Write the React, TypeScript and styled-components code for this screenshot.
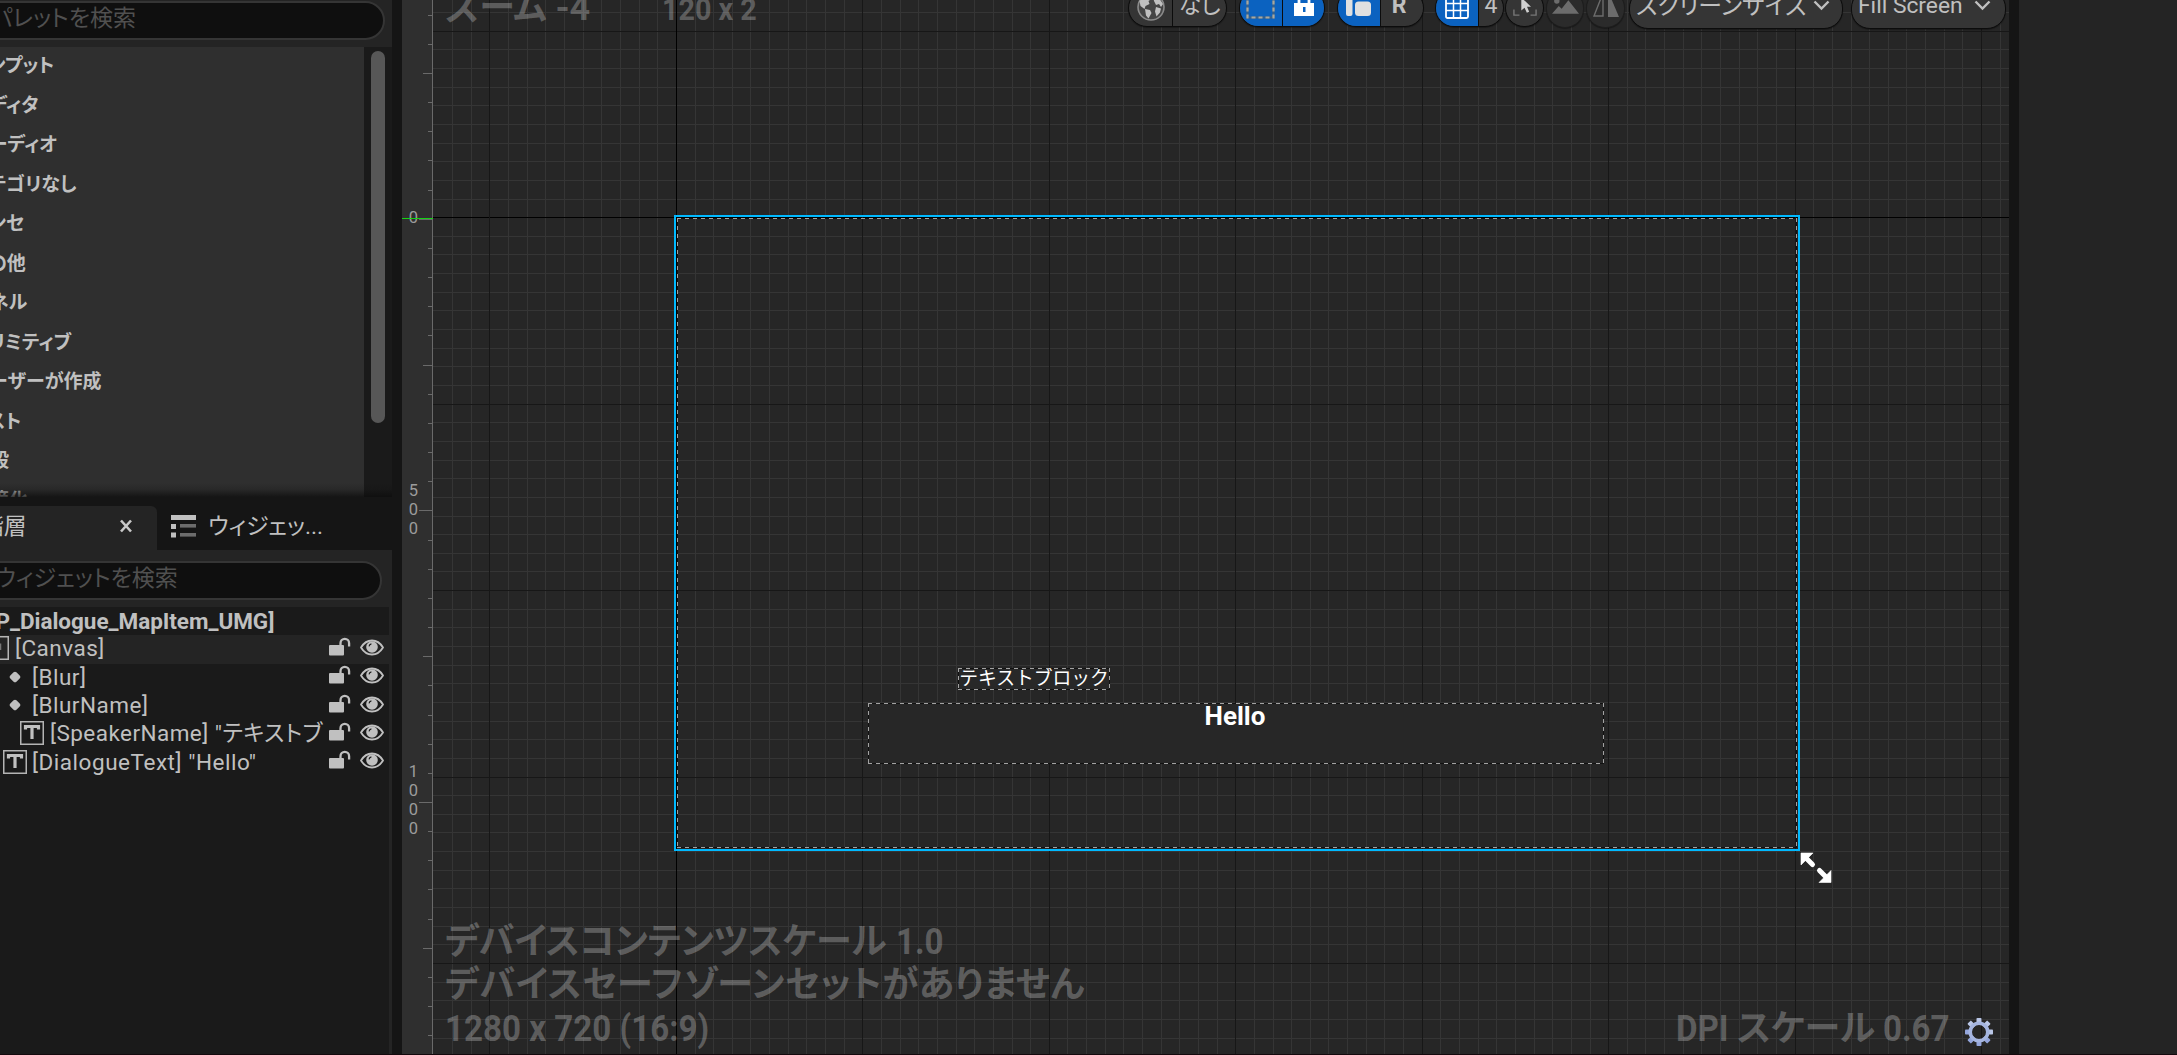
import React from "react";
import styled, { createGlobalStyle } from "styled-components";

const FONT = `Roboto, "Noto Sans CJK JP", sans-serif`;

const GlobalStyle = createGlobalStyle`
  html, body { margin: 0; padding: 0; background: #242424; overflow: hidden; }
  * { box-sizing: border-box; }
`;

const Editor = styled.div`
  display: grid;
  grid-template-columns: 392px 10px 31px 1576px 10px 1fr;
  width: 2177px;
  height: 1055px;
  overflow: hidden;
  background: #242424;
  border-bottom: 1px solid #14090d;
  color: #c0c0c0;
  font-family: ${FONT};
  font-feature-settings: "palt";
  white-space: nowrap;
`;

const Gutter = styled.div`
  background: #151515;
`;

/* ---------- left column ---------- */

const LeftColumn = styled.div`
  display: flex;
  flex-direction: column;
  min-width: 0;
  height: 1054px;
  overflow: hidden;
  background: #151515;
`;

const PaletteHeader = styled.div`
  flex: none;
  height: 47px;
  padding-top: 1px;
  background: #242424;
`;

const SearchBox = styled.div<{ $right: number; $indent: number; $lift: number }>`
  display: flex;
  align-items: center;
  height: 39px;
  margin-left: -40px;
  margin-right: ${(p) => p.$right}px;
  padding: 0 0 ${(p) => p.$lift}px ${(p) => p.$indent}px;
  border: 2px solid #353535;
  border-radius: 20px;
  background: #0f0f0f;
  color: #505050;
  font-size: 23px;
`;

const PaletteBody = styled.div`
  position: relative;
  display: flex;
  flex: none;
  height: 450px;
  overflow: hidden;
  background: #2f2f2f;

  &::after {
    content: "";
    position: absolute;
    left: 0;
    right: 0;
    bottom: 0;
    height: 14px;
    background: linear-gradient(rgba(15, 15, 15, 0), rgba(15, 15, 15, 0.2) 45%, rgba(12, 12, 12, 0.75));
  }
`;

const CategoryList = styled.div`
  flex: 1;
  min-width: 0;
  margin-left: -29px;
`;

const Category = styled.div`
  height: 39.5px;
  line-height: 38px;
  font-size: 19px;
  font-weight: 700;
`;

const ScrollTrack = styled.div`
  flex: none;
  width: 28px;
  padding: 4px 7px 0;
  background: #1a1a1a;
`;

const ScrollThumb = styled.div`
  height: 372px;
  border-radius: 7px;
  background: #575757;
`;

const TabBar = styled.div`
  display: flex;
  flex: none;
  height: 53px;
  padding-top: 9px;
`;

const Tab = styled.div<{ $active?: boolean }>`
  display: flex;
  align-items: center;
  width: ${(p) => (p.$active ? "157px" : "235px")};
  height: 44px;
  padding: ${(p) => (p.$active ? "0 24px 4px 0" : "0 0 4px 14px")};
  border-radius: 0 6px 0 0;
  background: ${(p) => (p.$active ? "#242424" : "transparent")};
  font-size: 22.8px;
`;

const TabTitle = styled.span<{ $shift?: number }>`
  margin-left: ${(p) => p.$shift ?? 0}px;
  padding-bottom: 4px;
`;

const CloseIcon = styled.svg`
  margin-left: auto;
`;

const HierarchyPanel = styled.div`
  display: flex;
  flex: 1;
  flex-direction: column;
  padding-top: 11px;
  background: #242424;
`;

const Tree = styled.div`
  flex: 1;
  margin: 7px 3px 0 0;
  background: #1a1a1a;
`;

const TreeRow = styled.div<{ $indent: number; $hover?: boolean; $root?: boolean }>`
  display: flex;
  align-items: center;
  height: 28.3px;
  padding: 0 5px ${(p) => (p.$root ? 0 : 2)}px 0;
  background: ${(p) => (p.$hover ? "#242424" : "transparent")};
  font-size: 22.5px;
  font-weight: ${(p) => (p.$root ? 700 : 400)};
  line-height: 26px;

  & > :first-child {
    margin-left: ${(p) => p.$indent}px;
  }
`;

const TreeLabel = styled.span<{ $gap?: number; $spacing?: number }>`
  flex: 1;
  min-width: 0;
  padding-left: ${(p) => p.$gap ?? 0}px;
  letter-spacing: ${(p) => p.$spacing ?? 0.5}px;
`;

const RootLabel = styled.span`
  letter-spacing: -0.04px;
`;

const RowIcons = styled.div`
  display: flex;
  flex: none;
  gap: 9px;
  padding-bottom: 4px;
`;

/* ---------- ruler ---------- */

const Ruler = styled.div`
  position: relative;
  height: 1054px;
  overflow: hidden;
  background: #2f2f2f;
`;

const RulerTicks = styled.svg`
  display: block;
`;

const RulerLabel = styled.div<{ $top: number }>`
  position: absolute;
  left: 6px;
  top: ${(p) => p.$top}px;
  width: 11px;
  color: #9c9c9c;
  font-size: 16.5px;
  line-height: 19px;
  text-align: center;
  word-break: break-all;
  white-space: normal;
`;

const RulerCursor = styled.div`
  position: absolute;
  left: 0;
  top: 218px;
  width: 31px;
  height: 1px;
  background: #14d214;
`;

/* ---------- design canvas ---------- */

const Surface = styled.div`
  position: relative;
  height: 1054px;
  overflow: hidden;
  background: #262626;
`;

const Layer = styled.svg`
  position: absolute;
  left: 0;
  top: 0;
`;

const Watermark = styled.div<{ $left: number; $top: number; $spacing?: number; $size?: number }>`
  position: absolute;
  left: ${(p) => p.$left}px;
  top: ${(p) => p.$top}px;
  display: flex;
  color: rgba(255, 255, 255, 0.26);
  font-size: ${(p) => p.$size ?? 36}px;
  font-weight: 700;
  line-height: 43px;
  letter-spacing: ${(p) => p.$spacing ?? 0}px;
`;

const Narrow = styled.span<{ $w?: number; $gap?: number }>`
  display: inline-block;
  width: ${(p) => (p.$w ? p.$w + "px" : "auto")};
  margin-left: ${(p) => p.$gap ?? 0}px;
  transform: scaleX(0.92);
  transform-origin: 0 50%;
`;

const WidgetText = styled.div<{ $x: number; $y: number; $w: number; $size: number; $bold?: boolean }>`
  position: absolute;
  left: ${(p) => p.$x}px;
  top: ${(p) => p.$y}px;
  width: ${(p) => p.$w}px;
  color: #fff;
  font-size: ${(p) => p.$size}px;
  font-weight: ${(p) => (p.$bold ? 700 : 400)};
  font-feature-settings: normal;
  line-height: 24px;
  text-align: center;
`;

const Toolbar = styled.div`
  position: absolute;
  left: 695px;
  top: -11px;
  display: flex;
  align-items: flex-start;
`;

const Pill = styled.div<{ $w: number; $gap?: number; $h?: number; $dim?: boolean }>`
  display: flex;
  flex: none;
  width: ${(p) => p.$w}px;
  height: ${(p) => p.$h ?? 38}px;
  margin-right: ${(p) => p.$gap ?? 0}px;
  border: 1px solid ${(p) => (p.$dim ? "#1d1d1d" : "#0c0c0c")};
  border-radius: 19px;
  background: ${(p) => (p.$dim ? "#2b2b2b" : "#353535")};
  box-shadow: 0 1px 1px rgba(0, 0, 0, 0.35);
  overflow: hidden;
`;

const Segment = styled.div<{ $w?: number; $on?: boolean; $div?: boolean; $size?: number; $bold?: boolean; $lift?: number }>`
  display: flex;
  flex: ${(p) => (p.$w ? "none" : 1)};
  align-items: center;
  justify-content: center;
  width: ${(p) => (p.$w ? p.$w + "px" : "auto")};
  border-right: ${(p) => (p.$div ? "1px solid #0c0c0c" : "none")};
  background: ${(p) => (p.$on ? "#0b62c0" : "transparent")};
  font-size: ${(p) => p.$size ?? 23}px;
  font-weight: ${(p) => (p.$bold ? 700 : 400)};
  padding-bottom: ${(p) => p.$lift ?? 6}px;
  line-height: 30px;
`;

const Dropdown = styled.div<{ $start: number; $end: number; $size: number }>`
  display: flex;
  flex: 1;
  align-items: center;
  justify-content: space-between;
  padding: 0 ${(p) => p.$end}px 7px ${(p) => p.$start}px;
  font-size: ${(p) => p.$size}px;
  line-height: 30px;
`;

/* ---------- icons ---------- */

const Lock = () => (
  <svg width="22" height="19" viewBox="0 0 22 19">
    <path d="M11.5 9V6.2a4.3 4.3 0 0 1 8.6 0V9.5" fill="none" stroke="#c0c0c0" strokeWidth="2.3" />
    <rect x="0" y="8" width="15" height="10.5" rx="1" fill="#c0c0c0" />
  </svg>
);

const Eye = () => (
  <svg width="24" height="19" viewBox="0 0 24 19">
    <path d="M1 10.5C4 5.500 8 3.500 12 3.500s8 2 11 7c-3 5-7 7-11 7s-8-2-11-7z" fill="none" stroke="#c0c0c0" strokeWidth="1.8" />
    <circle cx="12" cy="10" r="5.8" fill="#c0c0c0" />
    <path d="M9 9.400a3 3 0 0 1 2.400-2.500" fill="none" stroke="#1a1a1a" strokeWidth="1.100" />
  </svg>
);

const BoxIcon = styled.svg`
  flex: none;
  width: 24px;
  height: 24px;
`;

const TextIcon = () => (
  <BoxIcon viewBox="0 0 24 24">
    <rect x="0.75" y="0.75" width="22.5" height="22.5" fill="none" stroke="#b4b4b4" strokeWidth="1.500" />
    <path d="M5.500 8.500V5.500h13v3M12 5.500V18" fill="none" stroke="#c0c0c0" strokeWidth="3.200" />
  </BoxIcon>
);

const CanvasIcon = () => (
  <BoxIcon viewBox="0 0 24 24">
    <rect x="0.75" y="0.75" width="22.5" height="22.5" fill="none" stroke="#b4b4b4" strokeWidth="1.500" />
    <path d="M15.500 14V7.500" fill="none" stroke="#777" strokeWidth="1.500" />
  </BoxIcon>
);

const DiamondIcon = styled.svg`
  flex: none;
  width: 12px;
  height: 12px;
`;

const Diamond = () => (
  <DiamondIcon viewBox="0 0 12 12">
    <rect x="1.700" y="1.700" width="8.600" height="8.600" rx="2" transform="rotate(45 6 6)" fill="#c0c0c0" />
  </DiamondIcon>
);

const BindIcon = () => (
  <svg width="25" height="23" viewBox="0 0 25 23">
    <rect x="0" y="0" width="25" height="5" fill="#c0c0c0" />
    <rect x="0" y="9" width="5" height="5" fill="#c0c0c0" />
    <rect x="0" y="17.500" width="5" height="5" fill="#c0c0c0" />
    <rect x="9" y="9" width="16" height="3.600" fill="#6c6c6c" />
    <rect x="9" y="18" width="16" height="3.600" fill="#6c6c6c" />
  </svg>
);

const Chevron = () => (
  <svg width="17" height="11" viewBox="0 0 17 11">
    <path d="M1.500 1.500l7 7 7-7" fill="none" stroke="#c0c0c0" strokeWidth="2.400" />
  </svg>
);

const Globe = () => (
  <svg width="28" height="28" viewBox="0 0 28 28">
    <circle cx="14" cy="14" r="13" fill="#454545" stroke="#8a8a8a" strokeWidth="1.600" />
    <path d="M2.500 8l5-5 6 0 1 3-3 2 1 3-4 2-1 3-4-3zM8 16l5 1 1.500 3-3 5.500-2.500-3zM16 3l6 2 4 6-2 3-2-3-3 1-2-4zM19 14l5 1.500-1 4-3.500 4-1.500-5z" fill="#c0c0c0" />
  </svg>
);

const Marquee = () => (
  <svg width="30" height="30" viewBox="0 0 30 30">
    <rect x="1.500" y="1.500" width="26" height="26" fill="none" stroke="#3b6288" strokeWidth="2.200" />
    <rect x="1.500" y="1.500" width="26" height="26" fill="none" stroke="#a8a8a0" strokeWidth="2.200" strokeDasharray="4 3" />
  </svg>
);

const Padlock = () => (
  <svg width="20" height="26" viewBox="0 0 20 26">
    <path d="M5 14V7a5 5 0 0 1 10 0v7" fill="none" stroke="#fff" strokeWidth="2.800" />
    <path d="M0 12h20v13H0zM9 16v5h2.500v-5z" fill="#fff" fillRule="evenodd" />
  </svg>
);

const Align = () => (
  <svg width="26" height="26" viewBox="0 0 26 26">
    <rect x="0" y="0" width="6.500" height="25" rx="2" fill="#e0e0e0" />
    <rect x="9" y="10.500" width="16" height="14.500" rx="3.500" fill="#e0e0e0" />
  </svg>
);

const GridIcon = () => (
  <svg width="24" height="24" viewBox="0 0 24 24">
    <rect x="1" y="1" width="22" height="22" rx="1.500" fill="none" stroke="#fff" strokeWidth="1.800" />
    <path d="M8.500 1v22M15.500 1v22M1 8.500h22M1 15.500h22" stroke="#fff" strokeWidth="1.500" />
  </svg>
);

const PointerIcon = () => (
  <svg width="24" height="24" viewBox="0 0 26 26">
    <path d="M1 7V1h6M19 1h6v6M25 19v6h-6M7 25H1v-6" fill="none" stroke="#777" strokeWidth="1.500" />
    <path d="M9 6v14l3.500-3 2.500 5.500 2.500-1.200-2.300-5.300h4.300z" fill="#d0d0d0" />
  </svg>
);

const Landscape = () => (
  <svg width="27" height="20" viewBox="0 0 28 20">
    <circle cx="5" cy="7" r="2.800" fill="#6c6c6c" />
    <path d="M0 20l7-8 3 3 7-9 11 14z" fill="#6c6c6c" />
  </svg>
);

const Mirror = () => (
  <svg width="28" height="28" viewBox="0 0 28 28">
    <path d="M2 27L11 4v23z" fill="none" stroke="#6c6c6c" strokeWidth="1.400" />
    <path d="M16 2l11 26H16z" fill="#6c6c6c" />
  </svg>
);

const Gear = () => (
  <g transform="translate(1546 1032)">
    {Array.from({ length: 8 }, (_, i) => (
      <rect key={i} x="-2.500" y="-14" width="5" height="7" rx="0.800" fill={i > 2 && i < 7 ? "#93a5dc" : "#b9c6e6"} transform={`rotate(${i * 45})`} />
    ))}
    <circle r="8.800" fill="none" stroke="#a5b5e0" strokeWidth="3.600" />
  </g>
);

const ResizeCursor = () => (
  <g fill="#fff" stroke="#fff">
    <path d="M1368 853h12l-12 12zM1398 882.500h-12l12-12z" strokeWidth="0.600" />
    <path d="M1373 858l6.500 6.500M1386.500 870.500l7 7" fill="none" strokeWidth="5" strokeLinecap="round" />
  </g>
);

/* ---------- drawings ---------- */

const range = (from: number, to: number) => Array.from({ length: to - from + 1 }, (_, i) => from + i);

const CELL = 18.645;
const ORIGIN_X = 676.4 - 433;
const ORIGIN_Y = 217.7;

const lineColor = (k: number) => (k === 0 ? "#000" : k % 10 === 0 ? "#171717" : "#353535");
const byWeight = (a: number, b: number) => Number(a % 10 === 0) - Number(b % 10 === 0);

const GridDrawing = () => (
  <Layer width="1576" height="1054" shapeRendering="crispEdges">
    {range(-12, 71).filter((k) => k % 10 !== 0).map((k) => (
      <rect key={"v" + k} x={Math.floor(ORIGIN_X + k * CELL)} y="0" width="1" height="1054" fill={lineColor(k)} />
    ))}
    {range(-11, 44).sort(byWeight).map((k) => (
      <rect key={"h" + k} x="0" y={Math.floor(ORIGIN_Y + k * CELL)} width="1576" height="1" fill={lineColor(k)} />
    ))}
    {range(-1, 7).map((k) => (
      <rect key={"m" + k} x={Math.floor(ORIGIN_X + k * 10 * CELL)} y="0" width="1" height="1054" fill={lineColor(k * 10)} />
    ))}
  </Layer>
);

const DashedBox = ({ x, y, w, h, fill = "none" }: { x: number; y: number; w: number; h: number; fill?: string }) => {
  const d = `M${x} ${y + 0.5}h${w}M${x} ${y + h - 0.5}h${w}M${x + 0.5} ${y}v${h}M${x + w - 0.5} ${y}v${h}`;
  return (
    <g shapeRendering="crispEdges">
      <rect x={x} y={y} width={w} height={h} fill={fill} />
      <path d={d} stroke="#111" fill="none" />
      <path d={d} stroke="#a2a2a2" fill="none" strokeDasharray="4 4" />
    </g>
  );
};

const tickLength = (k: number) => (k % 10 === 0 ? 13 : k % 5 === 0 ? 9 : 4);

const CATEGORIES = ["インプット", "エディタ", "オーディオ", "カテゴリなし", "シンセ", "その他", "パネル", "プリミティブ", "ユーザーが作成", "リスト", "一般", "最適化"];

const Icons = () => (
  <RowIcons>
    <Lock />
    <Eye />
  </RowIcons>
);

export default function App() {
  return (
    <>
      <GlobalStyle />
      <Editor>
        <LeftColumn>
          <PaletteHeader>
            <SearchBox $right={7} $indent={29} $lift={9}>パレットを検索</SearchBox>
          </PaletteHeader>
          <PaletteBody>
            <CategoryList>
              {CATEGORIES.map((c) => (
                <Category key={c}>{c}</Category>
              ))}
            </CategoryList>
            <ScrollTrack>
              <ScrollThumb />
            </ScrollTrack>
          </PaletteBody>
          <TabBar>
            <Tab $active>
              <TabTitle $shift={-19}>階層</TabTitle>
              <CloseIcon width="14" height="14" viewBox="0 0 14 14">
                <path d="M2 1.500l10 11M12 1.500l-10 11" stroke="#c8c8c8" strokeWidth="2.600" />
              </CloseIcon>
            </Tab>
            <Tab>
              <BindIcon />
              <TabTitle $shift={12}>ウィジェッ...</TabTitle>
            </Tab>
          </TabBar>
          <HierarchyPanel>
            <SearchBox $right={10} $indent={33} $lift={10}>ウィジェットを検索</SearchBox>
            <Tree>
              <TreeRow $indent={-25} $root>
                <RootLabel>[BP_Dialogue_MapItem_UMG]</RootLabel>
              </TreeRow>
              <TreeRow $indent={-15} $hover>
                <CanvasIcon />
                <TreeLabel $gap={6}>[Canvas]</TreeLabel>
                <Icons />
              </TreeRow>
              <TreeRow $indent={9}>
                <Diamond />
                <TreeLabel $gap={11}>[Blur]</TreeLabel>
                <Icons />
              </TreeRow>
              <TreeRow $indent={9}>
                <Diamond />
                <TreeLabel $gap={11}>[BlurName]</TreeLabel>
                <Icons />
              </TreeRow>
              <TreeRow $indent={20}>
                <TextIcon />
                <TreeLabel $gap={6} $spacing={0.45}>[SpeakerName] "テキストブ</TreeLabel>
                <Icons />
              </TreeRow>
              <TreeRow $indent={3}>
                <TextIcon />
                <TreeLabel $gap={5} $spacing={0.54}>[DialogueText] "Hello"</TreeLabel>
                <Icons />
              </TreeRow>
            </Tree>
          </HierarchyPanel>
        </LeftColumn>
        <Gutter />
        <Ruler>
          <RulerTicks width="31" height="1054" shapeRendering="crispEdges">
            <rect x="30" y="0" width="1" height="1054" fill="#6a6a6a" />
            {range(-7, 28).map((k) => (
              <rect key={k} x={30 - tickLength(k)} y={Math.floor(219.3 + k * 29.16)} width={tickLength(k)} height="1" fill="#6a6a6a" />
            ))}
          </RulerTicks>
          <RulerLabel $top={208}>0</RulerLabel>
          <RulerLabel $top={481}>500</RulerLabel>
          <RulerLabel $top={762}>1000</RulerLabel>
          <RulerCursor />
        </Ruler>
        <Surface>
          <GridDrawing />
          <Layer width="1576" height="1054">
            <DashedBox x={244} y={218} w={1120} h={630} />
            <DashedBox x={525} y={668} w={152} h={22} fill="#282828" />
            <DashedBox x={435} y={703} w={736} h={61} fill="#272727" />
            <rect x="242" y="216" width="1124" height="634" fill="none" stroke="#00b9ff" strokeWidth="2" />
            <ResizeCursor />
            <Gear />
          </Layer>
          <WidgetText $x={525} $y={667} $w={152} $size={18.8}>テキストブロック</WidgetText>
          <WidgetText $x={434} $y={704} $w={736} $size={26} $bold>Hello</WidgetText>
          <Watermark $left={12} $top={-13}>ズーム -4</Watermark>
          <Watermark $left={229} $top={-12} $size={31.2}>
            <Narrow>120 x 2</Narrow>
          </Watermark>
          <Watermark $left={12} $top={921}>
            デバイスコンテンツスケール<Narrow $gap={9}>1.0</Narrow>
          </Watermark>
          <Watermark $left={12} $top={964} $spacing={0.7}>デバイスセーフゾーンセットがありません</Watermark>
          <Watermark $left={12} $top={1008}>
            <Narrow>1280 x 720 (16:9)</Narrow>
          </Watermark>
          <Watermark $left={1243} $top={1008}>
            <Narrow $w={61}>DPI</Narrow>スケール<Narrow $gap={8}>0.67</Narrow>
          </Watermark>
          <Toolbar>
            <Pill $w={99} $gap={12}>
              <Segment $w={44} $div $lift={2}><Globe /></Segment>
              <Segment $lift={5}>なし</Segment>
            </Pill>
            <Pill $w={86} $gap={12}>
              <Segment $w={43} $on $div><Marquee /></Segment>
              <Segment $on $lift={8}><Padlock /></Segment>
            </Pill>
            <Pill $w={87} $gap={11}>
              <Segment $w={43} $on $div $lift={9}><Align /></Segment>
              <Segment $bold $lift={4}>R&nbsp;</Segment>
            </Pill>
            <Pill $w={69} $gap={1}>
              <Segment $w={43} $on $div $lift={2}><GridIcon /></Segment>
              <Segment $lift={4}>4</Segment>
            </Pill>
            <Pill $w={39} $gap={2}>
              <Segment $lift={8}><PointerIcon /></Segment>
            </Pill>
            <Pill $w={38} $gap={2} $h={39} $dim>
              <Segment $lift={9}><Landscape /></Segment>
            </Pill>
            <Pill $w={39} $gap={4} $h={39} $dim>
              <Segment $lift={12}><Mirror /></Segment>
            </Pill>
            <Pill $w={214} $gap={8} $h={40}>
              <Dropdown $start={6} $end={12} $size={23.9}>スクリーンサイズ<Chevron /></Dropdown>
            </Pill>
            <Pill $w={155} $h={40}>
              <Dropdown $start={6} $end={14} $size={22.8}>Fill Screen<Chevron /></Dropdown>
            </Pill>
          </Toolbar>
        </Surface>
        <Gutter />
      </Editor>
    </>
  );
}
